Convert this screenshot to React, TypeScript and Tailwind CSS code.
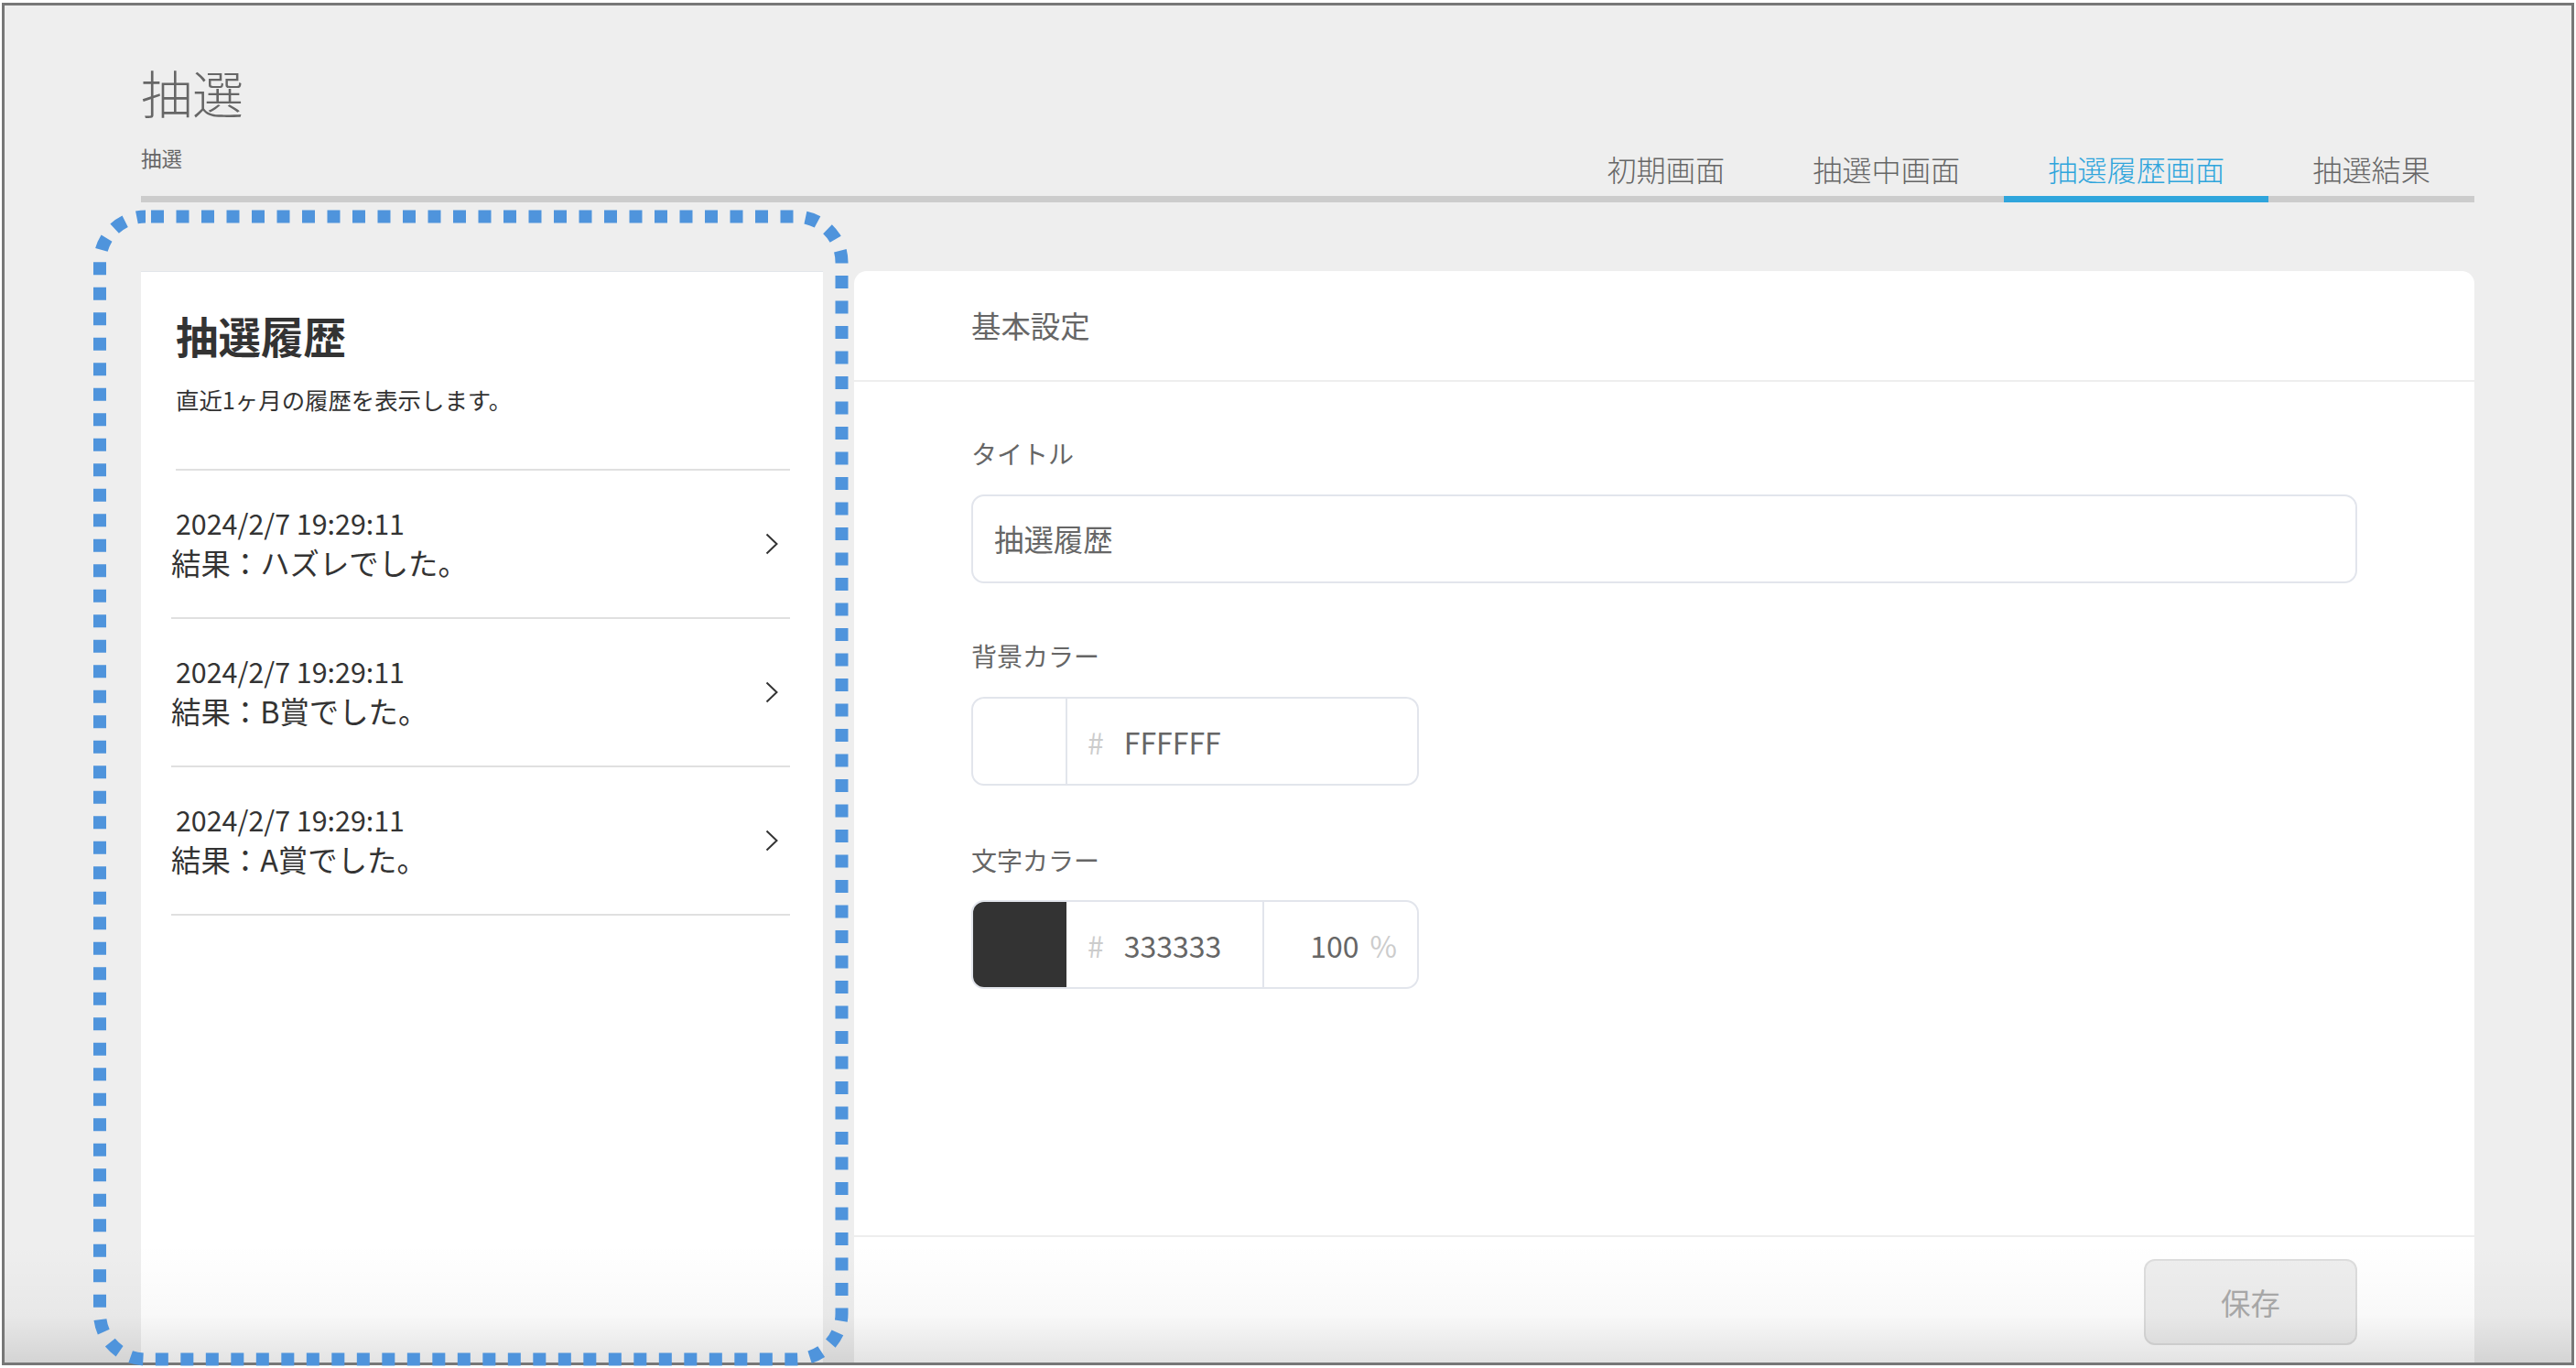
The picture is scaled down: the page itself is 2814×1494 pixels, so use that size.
const font = "font-['Noto_Sans_CJK_JP','Noto_Sans',sans-serif]";

const tabs = [
  { label: "初期画面" },
  { label: "抽選中画面" },
  { label: "抽選履歴画面", active: true },
  { label: "抽選結果" },
];

const rows = ["結果：ハズレでした。", "結果：B賞でした。", "結果：A賞でした。"];

function Chevron() {
  return (
    <svg width="14" height="24" viewBox="0 0 14 24" fill="none" className="shrink-0">
      <path d="M1.5 1.5 12.5 12 1.5 22.5" stroke="#333333" strokeWidth="2" />
    </svg>
  );
}

export default function App() {
  return (
    <div className={`relative h-[1494px] w-[2814px] overflow-hidden bg-white pl-[2px] pr-[2px] pt-[3px] ${font}`}>
      <div className="flex h-[1488px] flex-col overflow-hidden border-[3px] border-[#777777] bg-[#eeeeee] pl-[149px] pr-[106px]">
        <header className="flex h-[215px] shrink-0 items-end justify-between border-b-[7px] border-[#cccccc]">
          <div className="pb-[26px]">
            <h1 className="text-[56px] leading-[80px] font-light text-[#666666]">抽選</h1>
            <p className="mt-[16px] text-[22.5px] leading-[32px] text-[#666666]">抽選</p>
          </div>
          <nav className="-mb-[7px] flex">
            {tabs.map((t) => (
              <div
                key={t.label}
                className={`border-b-[7px] px-[48px] pb-[6px] text-[32.2px] leading-[48px] font-light ${
                  t.active ? "border-[#2fa5dc] text-[#2fa5dc]" : "border-transparent text-[#666666]"
                }`}
              >
                {t.label}
              </div>
            ))}
          </nav>
        </header>

        <div className="mt-[75px] flex flex-1 gap-[34px]">
          <aside className="w-[745px] shrink-0 border-t border-[#e2e6ea] bg-white pr-[36px]">
            <div className="pl-[38px] pt-[35px]">
              <h2 className="text-[46.5px] leading-[68px] font-bold text-[#333333]">抽選履歴</h2>
              <p className="mt-[18px] text-[25.4px] leading-[37px] text-[#333333]">直近1ヶ月の履歴を表示します。</p>
            </div>
            <ul className="mt-[57px] ml-[33px]">
              <li className="ml-[5px] h-[2px] bg-[#e0e0e0]" />
              {rows.map((r) => (
                <li key={r} className="flex h-[162px] items-center justify-between border-b-2 border-[#e0e0e0] pr-[13px]">
                  <div>
                    <div className="pl-[5px] text-[30.4px] leading-[40px] text-[#333333]">2024/2/7 19:29:11</div>
                    <div className="text-[32.4px] leading-[46px] text-[#333333]">{r}</div>
                  </div>
                  <Chevron />
                </li>
              ))}
            </ul>
          </aside>

          <main className="flex flex-1 flex-col rounded-t-[14px] bg-white">
            <div className="flex h-[121px] shrink-0 items-center border-b-2 border-[#eeeeee] pl-[128px] text-[32.4px] text-[#666666]">
              基本設定
            </div>
            <div className="flex-1 pl-[128px] pr-[128px]">
              <label className="mt-[57px] block text-[28px] leading-[42px] text-[#666666]">タイトル</label>
              <div className="mt-[24px] flex h-[97px] items-center rounded-[14px] border-2 border-[#e2e5ec] pl-[23px] text-[32.4px] text-[#666666]">
                抽選履歴
              </div>

              <label className="mt-[58px] block text-[28px] leading-[42px] text-[#666666]">背景カラー</label>
              <div className="mt-[24px] flex h-[97px] w-[489px] items-center rounded-[14px] border-2 border-[#e2e5ec]">
                <div className="h-full w-[103px] border-r-2 border-[#e2e5ec]" />
                <span className="ml-[22px] text-[32px] text-[#cccccc]">#</span>
                <span className="ml-[22px] text-[32px] text-[#666666]">FFFFFF</span>
              </div>

              <label className="mt-[60px] block text-[28px] leading-[42px] text-[#666666]">文字カラー</label>
              <div className="mt-[23px] flex h-[97px] w-[489px] items-center rounded-[14px] border-2 border-[#e2e5ec]">
                <div className="h-full w-[102px] rounded-l-[12px] bg-[#333333]" />
                <div className="flex h-full w-[214px] items-center">
                  <span className="ml-[23px] text-[32px] text-[#cccccc]">#</span>
                  <span className="ml-[22px] text-[32px] text-[#666666]">333333</span>
                </div>
                <div className="flex h-full flex-1 items-center justify-end border-l-2 border-[#e2e5ec] pr-[22px]">
                  <span className="text-[32px] text-[#666666]">100</span>
                  <span className="ml-[12px] text-[32px] text-[#cccccc]">%</span>
                </div>
              </div>
            </div>
            <div className="flex h-[139px] shrink-0 justify-end border-t-2 border-[#eeeeee] pr-[128px] pt-[24px]">
              <button className="h-[94px] w-[233px] rounded-[12px] border-2 border-[#dddddd] bg-[#eeeeee] text-[32.4px] text-[#aaaaaa]">
                保存
              </button>
            </div>
          </main>
        </div>
      </div>

      {/* bottom fade over the screenshot */}
      <div className="pointer-events-none absolute inset-x-[5px] bottom-[6px] h-[130px] bg-gradient-to-b from-black/0 via-black/[0.025] via-60% to-black/[0.11]" />

      {/* dotted callout */}
      <svg className="pointer-events-none absolute left-0 top-0" width="2814" height="1494" fill="none">
        <rect x="109" y="236.5" width="810.5" height="1248" rx="50" stroke="#4f94dc" strokeWidth="14" strokeDasharray="14 13.5" strokeDashoffset="21.5" />
      </svg>
    </div>
  );
}
